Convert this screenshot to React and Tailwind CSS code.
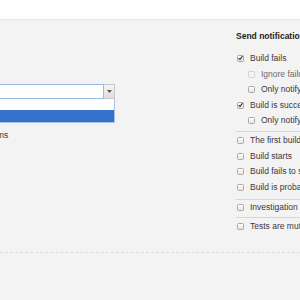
import React from "react";

const Check = ({ checked, disabled }) => (
  <span
    className={`flex h-[7px] w-[7px] shrink-0 items-center justify-center rounded-[1.5px] border ${
      disabled ? "border-[#cfcfcf] bg-[#f4f4f4]" : "border-[#a9a9a9] bg-gradient-to-b from-white to-[#e4e4e4]"
    }`}
  >
    {checked && (
      <svg width="6" height="6" viewBox="0 0 6 6" className="-mt-[1px]">
        <path d="M0.8 3.2 L2.4 4.8 L5.4 0.8" fill="none" stroke="#2a2a2a" strokeWidth="1.3" />
      </svg>
    )}
  </span>
);

const Row = ({ label, checked, indent, disabled }) => (
  <div className={`flex h-[15.5px] items-center whitespace-nowrap ${indent ? "pl-[12px]" : "pl-[1px]"}`}>
    <Check checked={checked} disabled={disabled} />
    <span className={`ml-[6px] ${disabled ? "text-[#6e6a70]" : "text-[#3b3640]"}`}>{label}</span>
  </div>
);

const Sep = ({ className }) => <div className={`h-px bg-[#d6d6d6] ${className}`} />;

export default function App() {
  return (
    <div
      className="h-[300px] w-[300px] overflow-hidden bg-[#f3f3f3] text-[8.5px]"
      style={{ fontFamily: '"Liberation Sans", Arial, sans-serif' }}
    >
      <div className="h-[20px] border-b border-[#e1e6ec] bg-white" />
      <div className="flex h-[233px] border-b border-dashed border-[#dcdcdc]">
        <div className="w-[236px] shrink-0">
          <div className="mt-[64px] flex w-[116px] -ml-[1px]">
            <div className="flex h-[15px] w-[105px] border border-[#9cb8e4] bg-white" />
            <div className="flex h-[15px] w-[11px] items-center justify-center border border-l-0 border-[#c8c8c8] bg-gradient-to-b from-[#f4f4f4] to-[#dedede]">
              <svg width="5" height="3" viewBox="0 0 5 3">
                <path d="M0 0 H5 L2.5 3 Z" fill="#555" />
              </svg>
            </div>
          </div>
          <div className="w-[116px] -ml-[1px] border border-t-0 border-[#a9c1e6] bg-white">
            <div className="h-[11px] bg-white" />
            <div className="h-[12px] bg-[#3572c9]" />
          </div>
          <div className="mt-[6px] -ml-[3px] leading-[12px] text-[#3b3640]">ms</div>
        </div>
        <div className="min-w-0 flex-1 pt-[10px]">
          <div className="h-[12px] whitespace-nowrap font-bold leading-[12px] text-[#1e1e1e]">
            Send notification when:
          </div>
          <div className="mt-[9px]">
            <Row label="Build fails" checked />
            <Row label="Ignore failures not caused by my changes" indent disabled />
            <Row label="Only notify on the first failed build" indent />
            <Row label="Build is successful" checked />
            <Row label="Only notify on the first successful build" indent />
          </div>
          <Sep className="mt-[2px]" />
          <div className="mt-[1.5px]">
            <Row label="The first build error occurs" />
            <Row label="Build starts" />
            <Row label="Build fails to start" />
            <Row label="Build is probably hanging" />
          </div>
          <Sep className="mt-[3.5px]" />
          <Row label="Investigation is updated" />
          <Sep className="mt-[2px]" />
          <div className="pt-[1px]">
            <Row label="Tests are muted or unmuted" />
          </div>
        </div>
      </div>
    </div>
  );
}
